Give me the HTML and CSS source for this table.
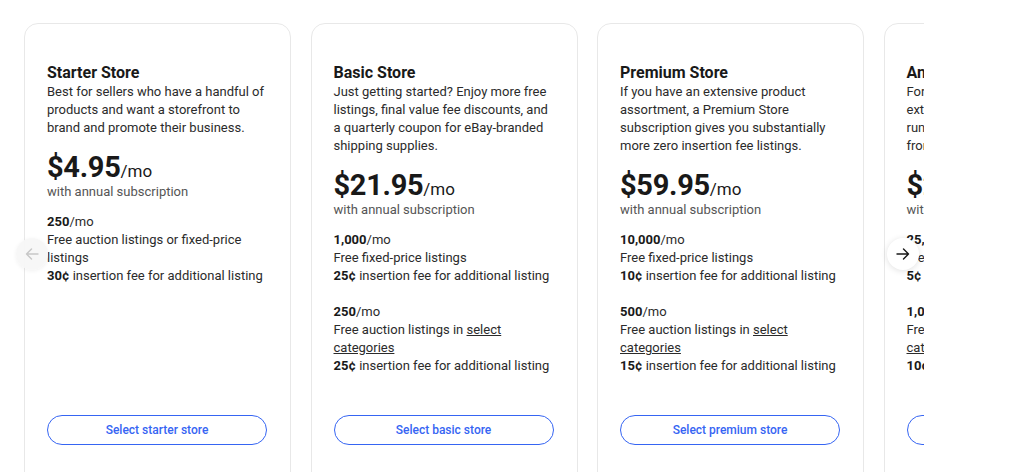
FILE: index.html
```html
<!DOCTYPE html>
<html lang="en">
<head>
<meta charset="utf-8">
<title>eBay Store subscriptions</title>
<link rel="stylesheet" href="styles.css">
</head>
<body>
<div class="carousel">
  <div class="viewport">
    <div class="track">
      <section class="card">
        <h2 class="title">Starter Store</h2>
        <p class="desc">Best for sellers who have a handful of products and want a storefront to brand and promote their business.</p>
        <div class="price"><span class="amount">$4.95</span><span class="per">/mo</span></div>
        <p class="note">with annual subscription</p>
        <div class="feature">
          <p><b>250</b>/mo</p>
          <p>Free auction listings or fixed-price listings</p>
          <p><b>30¢</b> insertion fee for additional listing</p>
        </div>
        <button class="select">Select starter store</button>
      </section>
      <section class="card">
        <h2 class="title">Basic Store</h2>
        <p class="desc">Just getting started? Enjoy more free listings, final value fee discounts, and a quarterly coupon for eBay-branded shipping supplies.</p>
        <div class="price"><span class="amount">$21.95</span><span class="per">/mo</span></div>
        <p class="note">with annual subscription</p>
        <div class="feature">
          <p><b>1,000</b>/mo</p>
          <p>Free fixed-price listings</p>
          <p><b>25¢</b> insertion fee for additional listing</p>
        </div>
        <div class="feature">
          <p><b>250</b>/mo</p>
          <p>Free auction listings in <a href="#">select categories</a></p>
          <p><b>25¢</b> insertion fee for additional listing</p>
        </div>
        <button class="select">Select basic store</button>
      </section>
      <section class="card">
        <h2 class="title">Premium Store</h2>
        <p class="desc">If you have an extensive product assortment, a Premium Store subscription gives you substantially more zero insertion fee listings.</p>
        <div class="price"><span class="amount">$59.95</span><span class="per">/mo</span></div>
        <p class="note">with annual subscription</p>
        <div class="feature">
          <p><b>10,000</b>/mo</p>
          <p>Free fixed-price listings</p>
          <p><b>10¢</b> insertion fee for additional listing</p>
        </div>
        <div class="feature">
          <p><b>500</b>/mo</p>
          <p>Free auction listings in <a href="#">select categories</a></p>
          <p><b>15¢</b> insertion fee for additional listing</p>
        </div>
        <button class="select">Select premium store</button>
      </section>
      <section class="card">
        <h2 class="title">Anchor Store</h2>
        <p class="desc">For sellers with a large and<br>extensive inventory who want to<br>run a high-volume business with<br>from dedicated support.</p>
        <div class="price"><span class="amount">$299.95</span><span class="per">/mo</span></div>
        <p class="note">with annual subscription</p>
        <div class="feature">
          <p><b>25,000</b>/mo</p>
          <p>Free fixed-price listings</p>
          <p><b>5¢</b> insertion fee for additional listing</p>
        </div>
        <div class="feature">
          <p><b>1,000</b>/mo</p>
          <p>Free auction listings in <a href="#">select categories</a></p>
          <p><b>10¢</b> insertion fee for additional listing</p>
        </div>
        <button class="select">Select anchor store</button>
      </section>
    </div>
  </div>
  <button class="arrow arrow-prev" aria-label="Previous">
    <svg width="16" height="16" viewBox="0 0 16 16"><path d="M14 8H2.5M7.5 3L2.5 8l5 5" fill="none" stroke="currentColor" stroke-width="1.4" stroke-linecap="round" stroke-linejoin="round"/></svg>
  </button>
  <button class="arrow arrow-next" aria-label="Next">
    <svg width="16" height="16" viewBox="0 0 16 16"><path d="M2 8h11.5M8.5 3l5 5-5 5" fill="none" stroke="currentColor" stroke-width="1.4" stroke-linecap="round" stroke-linejoin="round"/></svg>
  </button>
</div>
</body>
</html>
```
FILE: styles.css
```css
* { box-sizing: border-box; }
html, body {
  margin: 0;
  padding: 0;
  background: #ffffff;
}
body {
  font-family: Roboto, "Noto Sans", Arial, sans-serif;
  color: #191919;
  height: 472px;
  overflow: hidden;
}
.carousel {
  position: relative;
  width: 924px;
  padding-top: 23px;
  padding-left: 24px;
}
.viewport {
  width: 900px;
  overflow: hidden;
}
.track {
  display: flex;
  gap: 19.5px;
}
.card {
  flex: 0 0 267px;
  height: 480px;
  border: 1px solid #e8e8e8;
  border-radius: 14px;
  padding: 39px 22px 57px 22px;
  display: flex;
  flex-direction: column;
  background: #fff;
}
.title {
  margin: 0;
  font-size: 16px;
  line-height: 20px;
  font-weight: 700;
  color: #191919;
}
.desc {
  margin: 0;
  font-size: 13px;
  line-height: 18px;
  color: #2b2b2b;
}
.price {
  margin-top: 14px;
  line-height: 32px;
  height: 32px;
  white-space: nowrap;
}
.amount {
  font-size: 29px;
  font-weight: 700;
  letter-spacing: -0.3px;
  color: #191919;
}
.per {
  font-size: 17px;
  color: #191919;
}
.note {
  margin: 0;
  font-size: 13px;
  line-height: 18px;
  color: #555555;
}
.feature {
  margin-top: 12px;
}
.feature + .feature {
  margin-top: 18px;
}
.feature p {
  margin: 0;
  font-size: 13px;
  line-height: 18px;
  color: #2b2b2b;
}
.feature b {
  font-weight: 700;
  color: #191919;
}
.feature a {
  color: #2b2b2b;
  text-decoration: underline;
}
.select {
  margin-top: auto;
  height: 30px;
  width: 220px;
  border: 1px solid #3665f3;
  border-radius: 15px;
  background: #fff;
  color: #3665f3;
  font-family: inherit;
  font-size: 12px;
  font-weight: 500;
  cursor: pointer;
  flex-shrink: 0;
}
.arrow {
  position: absolute;
  top: 238px;
  width: 32px;
  height: 32px;
  border-radius: 50%;
  border: none;
  display: flex;
  align-items: center;
  justify-content: center;
  padding: 0;
  cursor: pointer;
}
.arrow-prev {
  left: 16px;
  background: rgba(246, 246, 246, 0.92);
  color: #c7c7c7;
  box-shadow: 0 1px 4px rgba(0, 0, 0, 0.06);
}
.arrow-next {
  left: 887px;
  background: #ffffff;
  color: #191919;
  box-shadow: 0 1px 6px rgba(0, 0, 0, 0.12);
}
```
